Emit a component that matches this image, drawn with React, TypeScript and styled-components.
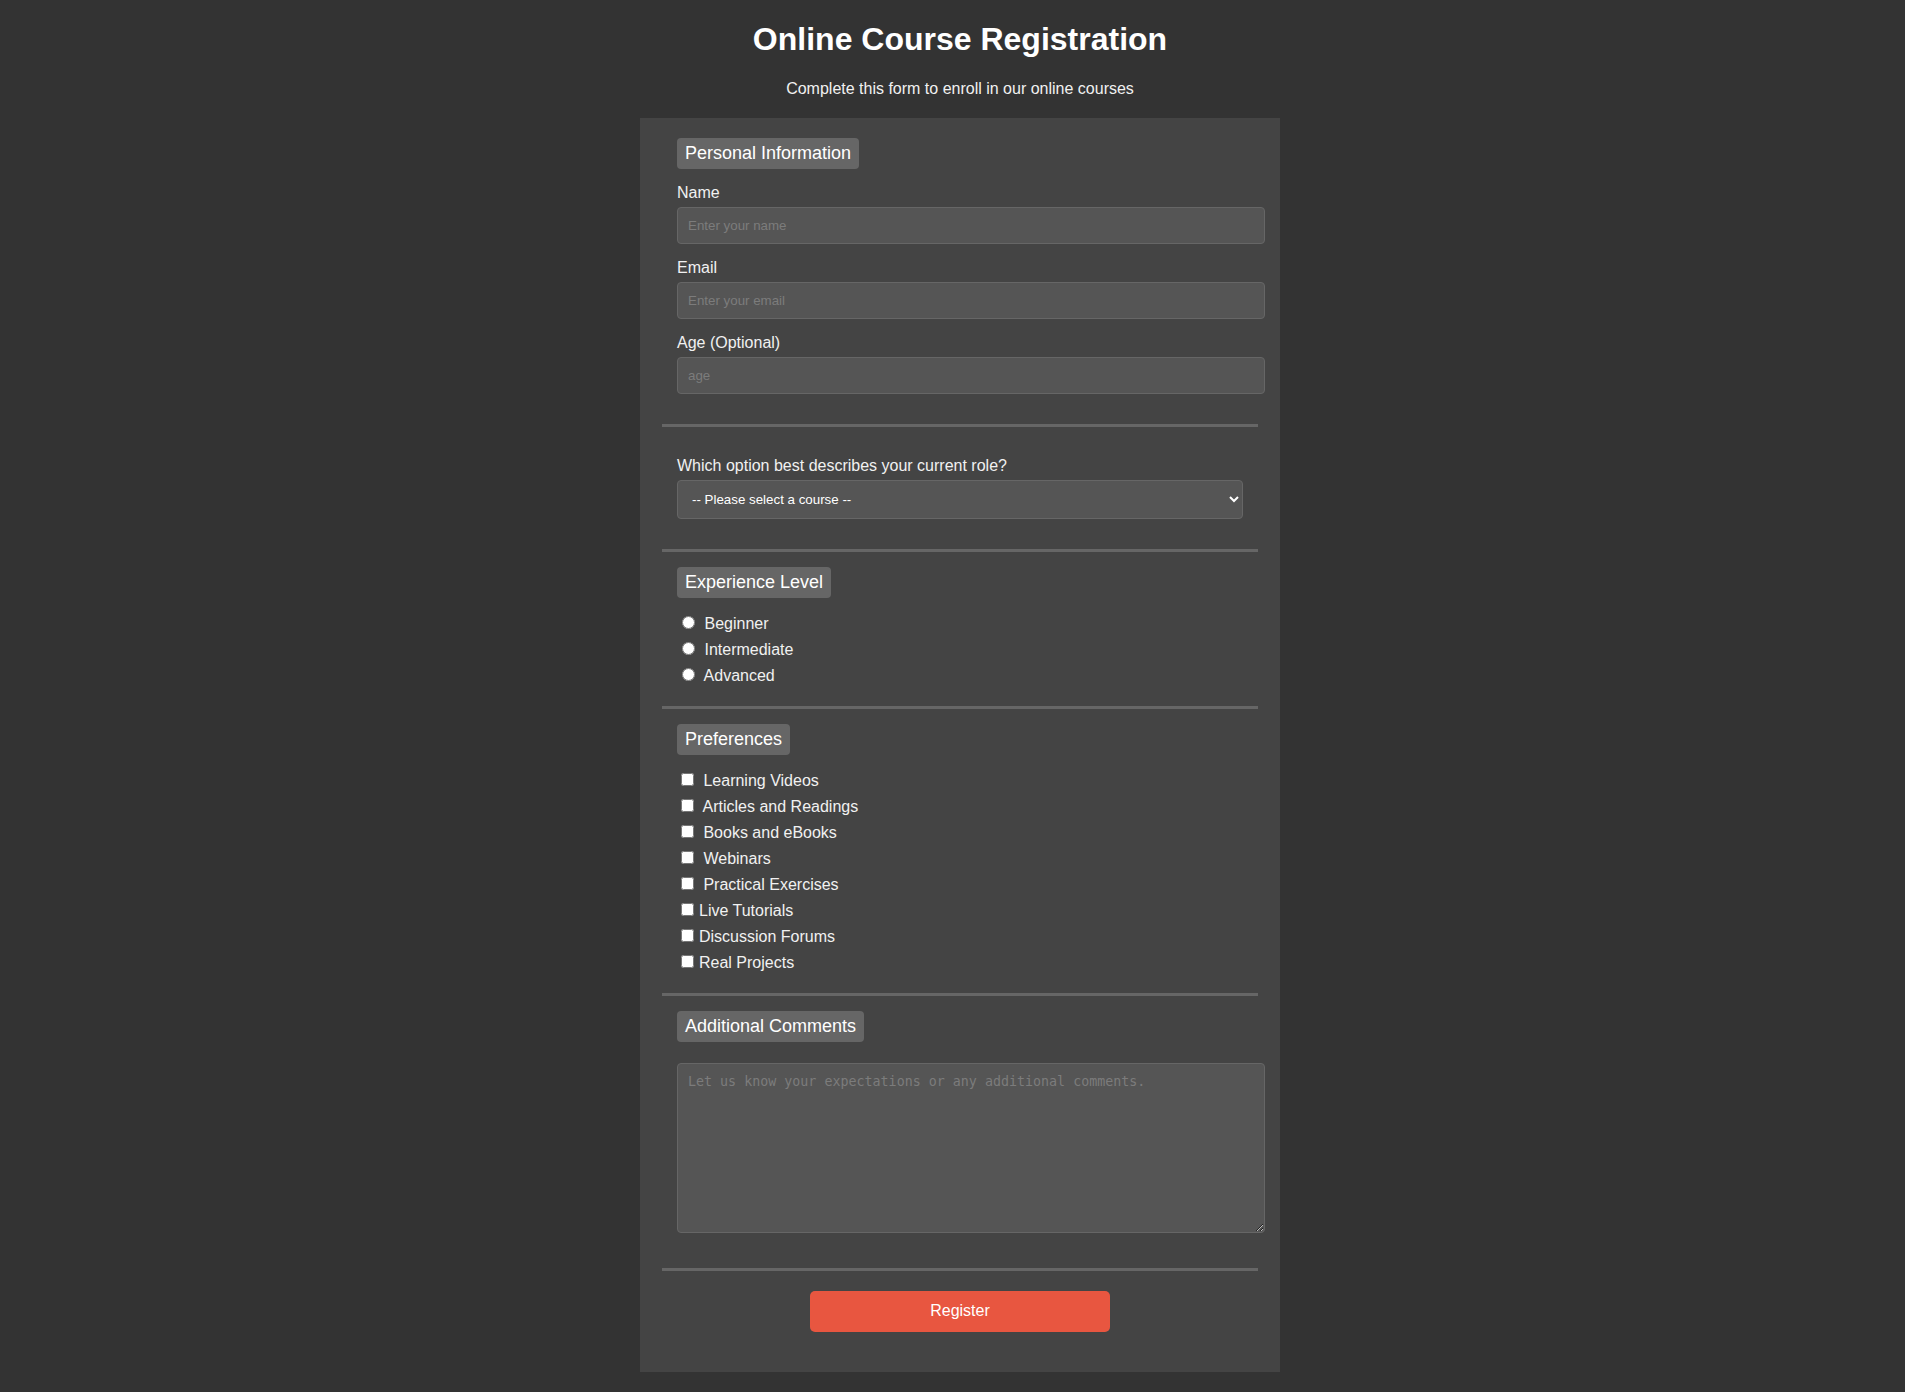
import styled, { createGlobalStyle } from "styled-components";

const GlobalStyle = createGlobalStyle`
  body {
    margin: 0;
    padding-left: 15px;
    background: #333;
    color: #f1f1f1;
    font-family: "Liberation Sans", Arial, sans-serif;
  }
`;

const Header = styled.header`
  text-align: center;
`;

const Title = styled.h1`
  margin: 21.44px 0;
  font-size: 32px;
  font-weight: bold;
  color: #fff;
`;

const Subtitle = styled.p`
  margin: 0 0 20px;
  font-size: 16px;
  color: #f1f1f1;
`;

const Form = styled.form`
  width: 600px;
  margin: 0 auto 20px;
  padding: 20px;
  background: #444;
`;

const Section = styled.fieldset`
  margin: 0 2px 15px;
  padding: 15px;
  border: none;
  border-bottom: 3px solid #666;
  min-inline-size: auto;
`;

const Legend = styled.legend`
  padding: 5px 8px;
  background: #666;
  border-radius: 4px;
  font-size: 18px;
  color: #fff;
`;

const FieldLabel = styled.label`
  display: block;
  margin-bottom: 5px;
  font-size: 16px;
`;

const TextInput = styled.input`
  width: 100%;
  margin: 0 0 15px;
  padding: 10px;
  background: #555;
  border: 1px solid #666;
  border-radius: 4px;
  color: #fff;
  font-family: "Liberation Sans", Arial, sans-serif;
  font-size: 13.33px;

  &::placeholder {
    color: #7c7c7c;
  }
`;

const Select = styled.select`
  display: block;
  width: 100%;
  margin: 0 0 15px;
  padding: 10px;
  background: #555;
  border: 1px solid #666;
  border-radius: 4px;
  color: #fff;
  font-family: "Liberation Sans", Arial, sans-serif;
  font-size: 13.33px;
`;

const OptionLabel = styled.label`
  display: block;
  margin-bottom: 6px;
  font-size: 16px;

  input {
    margin-right: 5px;
  }
`;

const Comments = styled.textarea`
  display: block;
  width: 100%;
  height: 148px;
  margin: 6px 0 20px;
  padding: 10px;
  background: #555;
  border: 1px solid #666;
  border-radius: 4px;
  color: #fff;
  font-family: "DejaVu Sans Mono", monospace;
  font-size: 13.33px;

  &::placeholder {
    color: #7c7c7c;
  }
`;

const ButtonRow = styled.div`
  padding: 5px 0 20px;
  text-align: center;
`;

const SubmitButton = styled.button`
  width: 300px;
  height: 41px;
  background: #e85640;
  border: none;
  border-radius: 5px;
  color: #fff;
  font-family: "Liberation Sans", Arial, sans-serif;
  font-size: 16px;
  cursor: pointer;
`;

const levels = ["Beginner", "Intermediate", "Advanced"];

// the first five were written with a space after the box in the original markup
const preferences: { label: string; spaced: boolean }[] = [
  { label: "Learning Videos", spaced: true },
  { label: "Articles and Readings", spaced: true },
  { label: "Books and eBooks", spaced: true },
  { label: "Webinars", spaced: true },
  { label: "Practical Exercises", spaced: true },
  { label: "Live Tutorials", spaced: false },
  { label: "Discussion Forums", spaced: false },
  { label: "Real Projects", spaced: false }
];

const App = () => {
  return (
    <>
      <GlobalStyle />
      <Header>
        <Title>Online Course Registration</Title>
        <Subtitle>Complete this form to enroll in our online courses</Subtitle>
      </Header>

      <Form onSubmit={(e) => e.preventDefault()}>
        {/* Personal info */}
        <Section>
          <Legend>Personal Information</Legend>
          <FieldLabel htmlFor="name">Name</FieldLabel>
          <TextInput id="name" type="text" placeholder="Enter your name" />
          <FieldLabel htmlFor="email">Email</FieldLabel>
          <TextInput id="email" type="email" placeholder="Enter your email" />
          <FieldLabel htmlFor="age">Age (Optional)</FieldLabel>
          <TextInput id="age" type="number" placeholder="age" />
        </Section>

        {/* Role */}
        <Section>
          <FieldLabel htmlFor="role">Which option best describes your current role?</FieldLabel>
          <Select id="role" defaultValue="">
            <option value="">-- Please select a course --</option>
            <option value="student">Student</option>
            <option value="professional">Professional</option>
            <option value="other">Other</option>
          </Select>
        </Section>

        {/* Experience */}
        <Section>
          <Legend>Experience Level</Legend>
          {levels.map((level) => (
            <OptionLabel key={level}>
              <input type="radio" name="level" value={level.toLowerCase()} /> {level}
            </OptionLabel>
          ))}
        </Section>

        {/* Preferences */}
        <Section>
          <Legend>Preferences</Legend>
          {preferences.map((pref) => (
            <OptionLabel key={pref.label}>
              <input type="checkbox" value={pref.label} />
              {pref.spaced ? " " + pref.label : pref.label}
            </OptionLabel>
          ))}
        </Section>

        {/* Comments */}
        <Section>
          <Legend>Additional Comments</Legend>
          <Comments placeholder="Let us know your expectations or any additional comments." />
        </Section>

        <ButtonRow>
          <SubmitButton type="submit">Register</SubmitButton>
        </ButtonRow>
      </Form>
    </>
  );
};

export default App;
